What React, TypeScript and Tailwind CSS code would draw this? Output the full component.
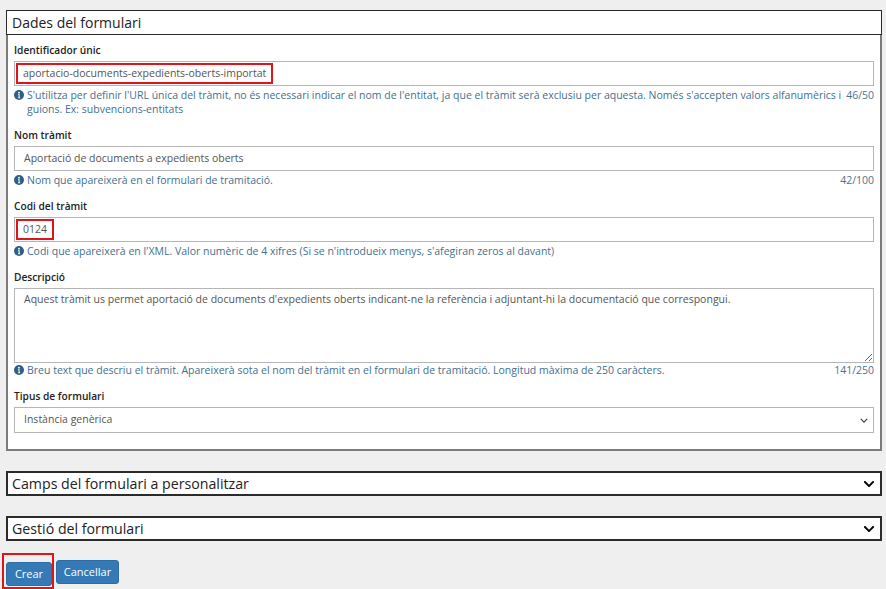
import { FaChevronDown } from "react-icons/fa";

const FONT = { fontFamily: '"Open Sans", "Noto Sans", sans-serif' };

function InfoIcon() {
  return (
    <svg viewBox="0 0 16 16" className="mr-[3px] mt-[2px] h-[10px] w-[10px] shrink-0" aria-hidden>
      <circle cx="8" cy="8" r="8" fill="#2f5f82" />
      <circle cx="8" cy="4.2" r="1.5" fill="#fff" />
      <path d="M6.3 6.6h2.7v5.2h1v1.4H6.3v-1.4h1V8H6.3z" fill="#fff" />
    </svg>
  );
}

function Help({
  children,
  count,
  tight,
}: {
  children: React.ReactNode;
  count?: string;
  tight?: boolean;
}) {
  return (
    <div
      className={`${tight ? "mt-0" : "mt-[2px]"} flex items-start text-[10.5px] leading-[14px] text-[#3f7091]`}
    >
      <InfoIcon />
      <p className="flex-1">{children}</p>
      {count ? <span className="ml-[4px] shrink-0 text-[#4d7290]">{count}</span> : null}
    </div>
  );
}

function Label({ children }: { children: string }) {
  return (
    <p className="mb-[4px] text-[10.2px] font-semibold leading-[14px] text-[#222]">{children}</p>
  );
}

function Field({
  label,
  value,
  marked,
  help,
  count,
}: {
  label: string;
  value: string;
  marked?: boolean;
  help: React.ReactNode;
  count?: string;
}) {
  return (
    <div>
      <Label>{label}</Label>
      {marked ? (
        <div className="flex h-[25px] items-stretch border border-[#b5b5b5] bg-white p-[1px]">
          <span className="flex items-center border-2 border-[#e0141b] px-[5px] text-[10.5px] text-[#555]">
            {value}
          </span>
        </div>
      ) : (
        <div className="flex h-[25px] items-center border border-[#b5b5b5] bg-white px-[9px] text-[10.5px] text-[#555]">
          {value}
        </div>
      )}
      <Help count={count}>{help}</Help>
    </div>
  );
}

function Collapsed({ title }: { title: string }) {
  return (
    <div className="flex h-[25px] items-center justify-between border-2 border-[#2b2b2b] bg-white pl-[4px] pr-[5px]">
      <span className="text-[14.2px] text-[#222]">{title}</span>
      <FaChevronDown className="h-[12px] w-[12px] text-black" aria-hidden />
    </div>
  );
}

export default function App() {
  return (
    <div className="min-h-[589px] bg-[#efefef] pb-4 pl-[6px] pr-[4px] pt-[10px]" style={FONT}>
      <section className="bg-white">
        <div className="flex h-[25px] items-center border border-[#2b2b2b] pl-[5px]">
          <h1 className="text-[14px] font-normal text-[#222]">Dades del formulari</h1>
        </div>
        <div className="border-x-2 border-b-2 border-[#7b7b7b] px-[6px] pb-[16px] pt-[8px]">
          <div className="space-y-[12px]">
            <Field
              label="Identificador únic"
              value="aportacio-documents-expedients-oberts-importat"
              marked
              help={
                <>
                  S'utilitza per definir l'URL única del tràmit, no és necessari indicar el nom de
                  l'entitat, ja que el tràmit serà exclusiu per aquesta. Només s'accepten valors
                  alfanumèrics i
                  <br />
                  guions. Ex: subvencions-entitats
                </>
              }
              count="46/50"
            />
            <Field
              label="Nom tràmit"
              value="Aportació de documents a expedients oberts"
              help="Nom que apareixerà en el formulari de tramitació."
              count="42/100"
            />
            <Field
              label="Codi del tràmit"
              value="0124"
              marked
              help="Codi que apareixerà en l'XML. Valor numèric de 4 xifres (Si se n'introdueix menys, s'afegiran zeros al davant)"
            />
            <div>
              <Label>Descripció</Label>
              <textarea
                readOnly
                defaultValue="Aquest tràmit us permet aportació de documents d'expedients oberts indicant-ne la referència i adjuntant-hi la documentació que correspongui."
                className="block h-[75px] w-full border border-[#b5b5b5] bg-white px-[9px] pt-[3px] text-[10.5px] leading-[14px] text-[#555] outline-none"
                style={FONT}
              />
              <Help tight count="141/250">
                Breu text que descriu el tràmit. Apareixerà sota el nom del tràmit en el formulari de
                tramitació. Longitud màxima de 250 caràcters.
              </Help>
            </div>
            <div>
              <Label>Tipus de formulari</Label>
              <div className="flex h-[26px] items-center justify-between border border-[#b5b5b5] bg-white pl-[9px] pr-[5px] text-[10.5px] text-[#555]">
                <span>Instància genèrica</span>
                <svg viewBox="0 0 10 6" className="h-[5px] w-[8px]" aria-hidden>
                  <path d="M1 1l4 4 4-4" fill="none" stroke="#444" strokeWidth="1.6" />
                </svg>
              </div>
            </div>
          </div>
        </div>
      </section>

      <div className="mt-[20px]">
        <Collapsed title="Camps del formulari a personalitzar" />
      </div>
      <div className="mt-[20px]">
        <Collapsed title="Gestió del formulari" />
      </div>

      <div className="mt-[19px] flex gap-[4px]">
        <div className="relative">
          <button
            type="button"
            className="h-[24px] w-[46px] rounded-[3px] border border-[#2e6da4] bg-[#337ab7] text-[11px] text-white"
          >
            Crear
          </button>
          <span className="pointer-events-none absolute left-[-4px] top-[-7px] h-[36px] w-[52px] border-2 border-[#e0141b]" />
        </div>
        <button
          type="button"
          className="h-[24px] w-[63px] rounded-[3px] border border-[#2e6da4] bg-[#337ab7] text-[11px] text-white"
        >
          Cancellar
        </button>
      </div>
    </div>
  );
}
